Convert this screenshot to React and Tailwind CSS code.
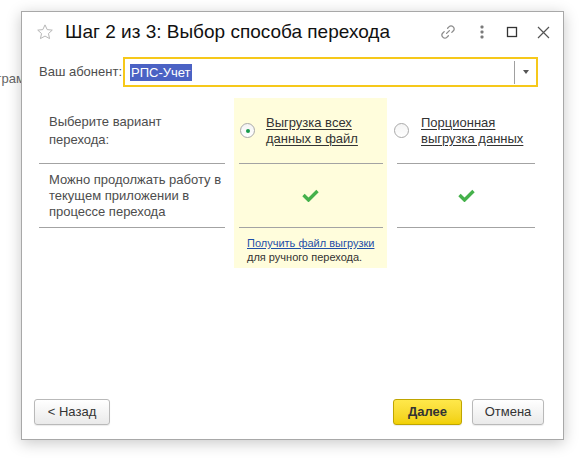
import React from "react";

function Star() {
  return (
    <svg width="18" height="18" viewBox="0 0 24 24" fill="none" stroke="#b5b5b5" strokeWidth="1.3" strokeLinejoin="round">
      <path d="M12 2.5l2.9 6.3 6.8.7-5.1 4.6 1.5 6.7L12 17.4l-6.1 3.4 1.5-6.7L2.3 9.5l6.8-.7z" />
    </svg>
  );
}

function LinkIcon() {
  return (
    <svg width="18" height="18" viewBox="0 0 18 18" fill="none" stroke="#8c8c8c" strokeWidth="1.3" strokeLinecap="round">
      <path d="M7.6 10.4l2.8-2.8" />
      <path d="M8.6 5.2l1.6-1.6a2.6 2.6 0 0 1 3.7 0l.5.5a2.6 2.6 0 0 1 0 3.7l-1.6 1.6" />
      <path d="M9.4 12.8l-1.6 1.6a2.6 2.6 0 0 1-3.7 0l-.5-.5a2.6 2.6 0 0 1 0-3.7l1.6-1.6" />
    </svg>
  );
}

function Dots() {
  return (
    <svg width="4" height="14" viewBox="0 0 4 14" fill="#7a7a7a">
      <rect x="0.5" y="0.5" width="3" height="3" rx="1" />
      <rect x="0.5" y="5.5" width="3" height="3" rx="1" />
      <rect x="0.5" y="10.5" width="3" height="3" rx="1" />
    </svg>
  );
}

function Maximize() {
  return (
    <svg width="12" height="12" viewBox="0 0 12 12" fill="none" stroke="#333" strokeWidth="1.3">
      <rect x="1.5" y="1.5" width="9" height="9" />
    </svg>
  );
}

function Close() {
  return (
    <svg width="13" height="13" viewBox="0 0 13 13" fill="none" stroke="#555" strokeWidth="1.2">
      <path d="M1 1l11 11M12 1L1 12" />
    </svg>
  );
}

function Check() {
  return (
    <svg width="17" height="13" viewBox="0 0 17 13" fill="none" stroke="#45b14b" strokeWidth="3.4" strokeLinejoin="miter">
      <path d="M1.5 6l5 5L15.5 2" />
    </svg>
  );
}

function Radio({ checked }) {
  return (
    <div className="w-[15px] h-[15px] shrink-0 rounded-full border border-[#a9a9a9] bg-gradient-to-b from-[#f4f4f4] to-white flex items-center justify-center">
      {checked && <div className="w-[4px] h-[4px] rounded-full bg-[#179a4c]" />}
    </div>
  );
}

export default function App() {
  return (
    <div className="relative w-[583px] h-[469px] bg-white overflow-hidden font-['Liberation_Sans',Arial,sans-serif]">
      <span className="absolute left-[-27px] top-[69px] text-[13px] text-[#666] whitespace-nowrap">Программа</span>

      <div className="absolute left-[21px] top-[11px] w-[543px] h-[429px] bg-white border border-[#a8a8a8] shadow-[0_3px_14px_rgba(0,0,0,0.22)] flex flex-col">
        {/* Header */}
        <div className="h-[40px] flex items-center pl-[14px]">
          <Star />
          <div className="ml-[11px] text-[19px] text-[#111] whitespace-nowrap">Шаг 2 из 3: Выбор способа перехода</div>
          <div className="ml-auto flex items-center pr-[8px]">
            <div className="w-[24px] h-[24px] flex items-center justify-center"><LinkIcon /></div>
            <div className="ml-[10px] w-[24px] h-[24px] flex items-center justify-center"><Dots /></div>
            <div className="ml-[6px] w-[24px] h-[24px] flex items-center justify-center"><Maximize /></div>
            <div className="ml-[7px] w-[24px] h-[24px] flex items-center justify-center"><Close /></div>
          </div>
        </div>

        {/* Field */}
        <div className="mt-[5px] flex items-center pl-[17px]">
          <div className="w-[84px] text-[13px] text-[#4d4d4d] whitespace-nowrap">Ваш абонент:</div>
          <div className="w-[415px] h-[30px] border-2 border-[#f6c81a] flex items-center">
            <div className="flex-1 pl-[5px] flex items-center">
              <span className="bg-[#4b62c4] text-white text-[13px] leading-[17px] px-[1px]">РПС-Учет</span>
            </div>
            <div className="w-px h-[23px] bg-[#a0a0a0]" />
            <div className="w-[21px] h-full flex items-center justify-center">
              <div className="w-0 h-0 border-l-[3.5px] border-r-[3.5px] border-t-[4px] border-l-transparent border-r-transparent border-t-[#555]" />
            </div>
          </div>
        </div>

        {/* Table */}
        <div className="mt-[11px] flex pl-[17px] text-[13px]">
          {/* Column 1 */}
          <div className="w-[186px] flex flex-col">
            <div className="h-[65px] flex items-center pl-[10px] text-[#4d4d4d] leading-[18px] whitespace-nowrap">
              Выберите вариант<br />перехода:
            </div>
            <div className="h-px bg-[#a3a3a3]" />
            <div className="h-[63px] flex items-center pl-[10px] text-[#4d4d4d] leading-[16px] whitespace-nowrap">
              Можно продолжать работу в<br />текущем приложении в<br />процессе перехода
            </div>
            <div className="h-px bg-[#a3a3a3]" />
          </div>

          {/* Column 2 */}
          <div className="ml-[9px] w-[153px] h-[170px] bg-[#fffddc] flex flex-col">
            <div className="h-[65px] flex items-center pl-[6px]">
              <Radio checked />
              <div className="ml-[11px] leading-[16px] text-[#333] underline underline-offset-2">
                Выгрузка всех<br />данных в файл
              </div>
            </div>
            <div className="h-px ml-[5px] mr-[4px] bg-[#a3a3a3]" />
            <div className="h-[63px] flex items-center justify-center">
              <Check />
            </div>
            <div className="h-px ml-[5px] mr-[4px] bg-[#a3a3a3]" />
            <div className="pl-[13px] pt-[8px] text-[11px] leading-[14px]">
              <div className="text-[#1f4fa8] underline">Получить файл выгрузки</div>
              <div className="text-[#333]">для ручного перехода.</div>
            </div>
          </div>

          {/* Column 3 */}
          <div className="w-[158px] flex flex-col">
            <div className="h-[65px] flex items-center pl-[7px]">
              <Radio />
              <div className="ml-[12px] leading-[16px] text-[#333] underline underline-offset-2">
                Порционная<br />выгрузка данных
              </div>
            </div>
            <div className="h-px mx-[10px] bg-[#a3a3a3]" />
            <div className="h-[63px] flex items-center justify-center">
              <Check />
            </div>
            <div className="h-px mx-[10px] bg-[#a3a3a3]" />
          </div>
        </div>

        {/* Footer */}
        <div className="mt-auto mb-[14px] flex items-center pl-[12px] pr-[19px] text-[13px]">
          <button className="w-[76px] h-[26px] rounded-[3px] border border-[#b9b9b9] bg-gradient-to-b from-white to-[#eaeaea] text-[#333] shadow-[0_1px_1px_rgba(0,0,0,0.08)]">
            &lt; Назад
          </button>
          <button className="ml-auto w-[69px] h-[26px] rounded-[3px] border border-[#bfa500] bg-gradient-to-b from-[#ffe84a] to-[#f1d000] text-[#333] font-bold shadow-[0_1px_1px_rgba(0,0,0,0.08)]">
            Далее
          </button>
          <button className="ml-[10px] w-[72px] h-[26px] rounded-[3px] border border-[#b9b9b9] bg-gradient-to-b from-white to-[#eaeaea] text-[#333] shadow-[0_1px_1px_rgba(0,0,0,0.08)]">
            Отмена
          </button>
        </div>
      </div>
    </div>
  );
}
